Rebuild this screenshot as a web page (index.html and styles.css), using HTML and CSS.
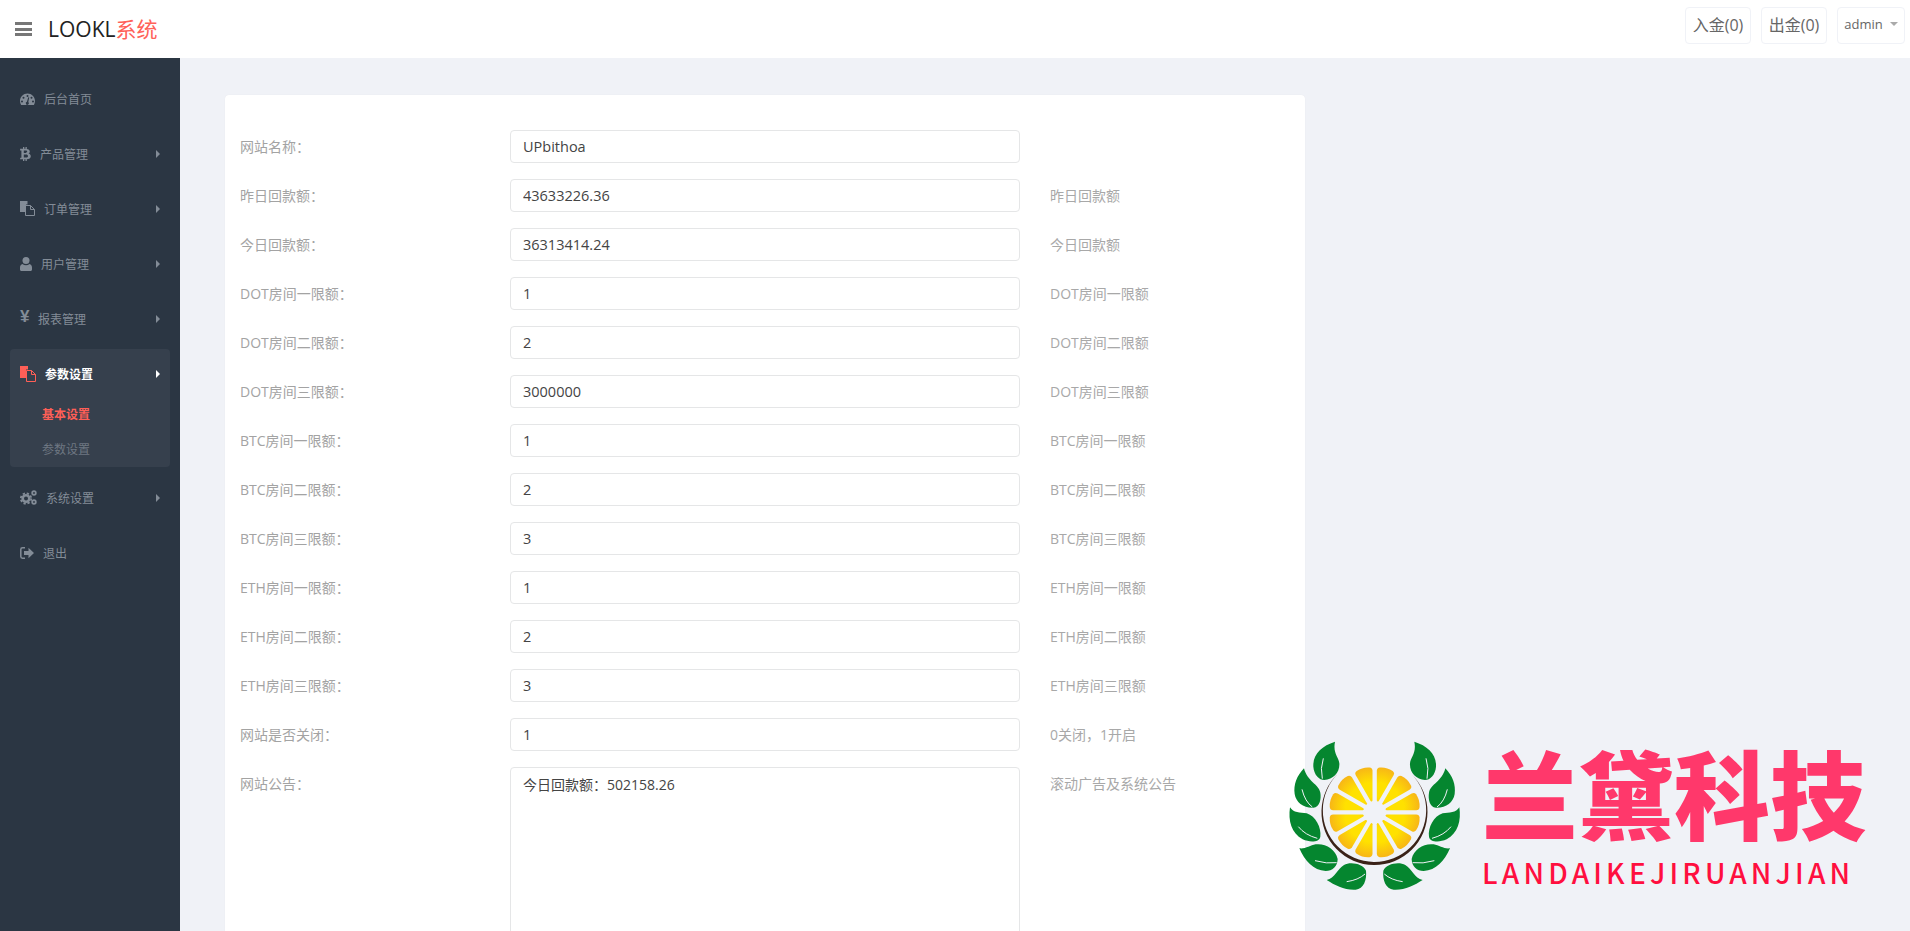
FILE: index.html
```html
<!DOCTYPE html>
<html lang="zh-CN">
<head>
    <meta charset="UTF-8">
    <title>LOOKL系统</title>
    <link rel="stylesheet" href="styles.css">
</head>
<body>

    <header class="topbar">
        <div class="burger"><span></span><span></span><span></span></div>
        <div class="brand">LOOKL<span>系统</span></div>
        <div class="top-actions">
            <a class="top-btn">入金(0)</a>
            <a class="top-btn">出金(0)</a>
            <a class="top-btn top-user">admin <i class="caret"></i></a>
        </div>
    </header>

    <div class="layout">
        <nav class="sidebar">
            <a class="nav-item">
                <svg class="icon" width="15" height="14" viewBox="0 0 15 14"><path fill="currentColor" fill-rule="evenodd" d="M7.5 1.5C3.4 1.5 0 4.8 0 9c0 1.500.4 2.800 1.100 4h12.800c.7-1.200 1.100-2.500 1.100-4 0-4.200-3.400-7.500-7.500-7.500zM7.500 3a1 1 0 1 1 0 2 1 1 0 0 1 0-2zM3.500 4.700a1 1 0 1 1 0 2 1 1 0 0 1 0-2zM11.500 4.700a1 1 0 1 1 0 2 1 1 0 0 1 0-2zM2 8.500a1 1 0 1 1 0 2 1 1 0 0 1 0-2zM13 8.500a1 1 0 1 1 0 2 1 1 0 0 1 0-2zM9.200 5.500l-.9 4.600a1.500 1.500 0 1 1-1.400-.3l1.400-4.500z"/></svg>
                后台首页
            </a>
            <a class="nav-item has-sub">
                <svg class="icon" width="11" height="14" viewBox="0 0 11 14"><path fill="currentColor" fill-rule="evenodd" d="M3 0h1.300v1.800h1.200V0h1.300v1.900C8.500 2.200 9.800 3 9.800 4.500c0 1-.6 1.800-1.400 2.100 1.400.3 2.400 1.200 2.400 2.700 0 2-1.600 2.800-4 2.900V14H5.500v-1.700H4.300V14H3v-1.700H0l.3-1.600h1.100V3.400H.1V1.800H3zM3.800 3.500v2.400h1.900c.9 0 1.500-.4 1.500-1.200s-.6-1.200-1.500-1.200zM3.800 7.500v3.100h2.300c1.100 0 1.900-.5 1.900-1.500S7.200 7.500 6.100 7.500z"/></svg>
                产品管理
            </a>
            <a class="nav-item has-sub">
                <svg class="icon" width="15" height="15" viewBox="0 0 15 15"><path fill="currentColor" d="M0 0h7.500v3.500H6V11H0z"/><path fill="none" stroke="currentColor" d="M5.500 4.500h5l4 4v6h-9zM10.500 4.500v4h4"/></svg>
                订单管理
            </a>
            <a class="nav-item has-sub">
                <svg class="icon" width="12" height="14" viewBox="0 0 12 14"><circle fill="currentColor" cx="6" cy="3.500" r="3.500"/><path fill="currentColor" d="M2.500 7C1 7.300 0 8.600 0 10.500V12.500C0 13.400.6 14 1.500 14h9c.9 0 1.500-.6 1.500-1.500v-2C12 8.600 11 7.300 9.500 7 8.600 7.800 7.400 8.200 6 8.200S3.400 7.800 2.500 7z"/></svg>
                用户管理
            </a>
            <a class="nav-item has-sub">
                <span class="icon icon-yen">¥</span>
                报表管理
            </a>

            <div class="nav-group">
                <a class="nav-item has-sub active">
                    <svg class="icon" width="16" height="16" viewBox="0 0 16 16"><path fill="currentColor" d="M0 0h8v3.500H6V12H0z"/><path fill="none" stroke="currentColor" d="M6.500 4.500h5l4 4v7h-9zM11.500 4.500v4h4"/></svg>
                    参数设置
                </a>
                <a class="sub-item current">基本设置</a>
                <a class="sub-item">参数设置</a>
            </div>

            <a class="nav-item has-sub">
                <svg class="icon" width="17" height="15" viewBox="0 0 17 15"><circle cx="6" cy="8.500" r="3.300" fill="none" stroke="currentColor" stroke-width="2.600"/><circle cx="6" cy="8.500" r="5.200" fill="none" stroke="currentColor" stroke-width="1.800" stroke-dasharray="2.300 1.800"/><circle cx="14" cy="3" r="1.800" fill="none" stroke="currentColor" stroke-width="1.800"/><circle cx="14" cy="12" r="1.800" fill="none" stroke="currentColor" stroke-width="1.800"/></svg>
                系统设置
            </a>
            <a class="nav-item">
                <svg class="icon" width="14" height="12" viewBox="0 0 14 12"><path fill="none" stroke="currentColor" stroke-width="1.500" d="M5 .8H2.500C1.500.8.800 1.500.8 2.500v7c0 1 .7 1.700 1.700 1.700H5"/><path fill="currentColor" d="M8.500.8 14 6l-5.500 5.200V8H4V4h4.500z"/></svg>
                退出
            </a>
        </nav>

        <main class="content">
            <form class="panel">
                <label class="field-label">网站名称：</label>
                <input class="field-input" type="text" value="UPbithoa">
                <span class="field-hint"></span>

                <label class="field-label">昨日回款额：</label>
                <input class="field-input" type="text" value="43633226.36">
                <span class="field-hint">昨日回款额</span>

                <label class="field-label">今日回款额：</label>
                <input class="field-input" type="text" value="36313414.24">
                <span class="field-hint">今日回款额</span>

                <label class="field-label">DOT房间一限额：</label>
                <input class="field-input" type="text" value="1">
                <span class="field-hint">DOT房间一限额</span>

                <label class="field-label">DOT房间二限额：</label>
                <input class="field-input" type="text" value="2">
                <span class="field-hint">DOT房间二限额</span>

                <label class="field-label">DOT房间三限额：</label>
                <input class="field-input" type="text" value="3000000">
                <span class="field-hint">DOT房间三限额</span>

                <label class="field-label">BTC房间一限额：</label>
                <input class="field-input" type="text" value="1">
                <span class="field-hint">BTC房间一限额</span>

                <label class="field-label">BTC房间二限额：</label>
                <input class="field-input" type="text" value="2">
                <span class="field-hint">BTC房间二限额</span>

                <label class="field-label">BTC房间三限额：</label>
                <input class="field-input" type="text" value="3">
                <span class="field-hint">BTC房间三限额</span>

                <label class="field-label">ETH房间一限额：</label>
                <input class="field-input" type="text" value="1">
                <span class="field-hint">ETH房间一限额</span>

                <label class="field-label">ETH房间二限额：</label>
                <input class="field-input" type="text" value="2">
                <span class="field-hint">ETH房间二限额</span>

                <label class="field-label">ETH房间三限额：</label>
                <input class="field-input" type="text" value="3">
                <span class="field-hint">ETH房间三限额</span>

                <label class="field-label">网站是否关闭：</label>
                <input class="field-input" type="text" value="1">
                <span class="field-hint">0关闭，1开启</span>

                <label class="field-label">网站公告：</label>
                <textarea class="field-input field-area">今日回款额：502158.26</textarea>
                <span class="field-hint">滚动广告及系统公告</span>
            </form>
        </main>
    </div>

    <!-- watermark sits over the page -->
    <div class="watermark">
        <svg class="wm-logo" width="200" height="201" viewBox="0 0 600 603">
            <defs>
                <radialGradient id="slice" gradientUnits="userSpaceOnUse" cx="0" cy="-70" r="85">
                    <stop offset="0.25" stop-color="#ffe100"/>
                    <stop offset="1" stop-color="#f4a520"/>
                </radialGradient>
                <g id="leaves">
                    <path class="leaf" d="M165 35C125 48 98 72 100 110c2 25 18 40 33 40 27-2 47-22 45-50-2-20-20-30-13-65z"/>
                    <path class="vein" d="M130 85Q120 115 127 146"/>
                    <path class="leaf" d="M72 115C50 138 40 165 44 192c4 25 26 42 56 41 20-1 24-28 21-45C116 162 82 155 72 115z"/>
                    <path class="vein" d="M66 178Q75 215 97 231"/>
                    <path class="leaf" d="M30 232c-6 40 4 78 38 96 22 10 50 9 53-8 4-26-14-62-41-70-20-3-40-1-50-18z"/>
                    <path class="vein" d="M55 290Q75 315 112 325"/>
                    <path class="leaf" d="M58 355c16 37 42 67 79 68 20 0 36-14 36-36-6-30-38-48-66-44-17 3-32 15-49 12z"/>
                    <path class="vein" d="M105 392Q140 402 170 398"/>
                    <path class="leaf" d="M140 450c25 16 55 31 87 29 24-2 34-30 31-57-8-20-46-28-66-17-20 11-27 40-52 45z"/>
                    <path class="vein" d="M200 455Q235 450 255 432"/>
                </g>
                <path id="wedge" fill="url(#slice)" d="M-3-36-26-122Q-28-131-20-134-0-141 20-134 28-131 26-122L3-36Q0-31-3-36z"/>
            </defs>
            <use href="#leaves"/>
            <use href="#leaves" transform="translate(568 0) scale(-1 1)"/>
            <path fill="#3a2218" d="M175 130A159 159 0 1 0 395 133 155 155 0 1 1 175 130z"/>
            <g transform="translate(284 247)">
                <use href="#wedge" transform="rotate(15)"/>
                <use href="#wedge" transform="rotate(45)"/>
                <use href="#wedge" transform="rotate(75)"/>
                <use href="#wedge" transform="rotate(105)"/>
                <use href="#wedge" transform="rotate(135)"/>
                <use href="#wedge" transform="rotate(165)"/>
                <use href="#wedge" transform="rotate(195)"/>
                <use href="#wedge" transform="rotate(225)"/>
                <use href="#wedge" transform="rotate(255)"/>
                <use href="#wedge" transform="rotate(285)"/>
                <use href="#wedge" transform="rotate(315)"/>
                <use href="#wedge" transform="rotate(345)"/>
            </g>
        </svg>
        <div class="wm-text">
            <div class="wm-title">兰黛科技</div>
            <div class="wm-sub">LANDAIKEJIRUANJIAN</div>
        </div>
    </div>

</body>
</html>
```

FILE: styles.css
```css
* {
    box-sizing: border-box;
}

html, body {
    height: 100%;
}

body {
    margin: 0;
    overflow: hidden;
    font-family: "Open Sans", "Noto Sans CJK SC", sans-serif;
    font-size: 14px;
    background-color: #f0f2f7;
    color: #666;
}

/* top bar */
.topbar {
    display: flex;
    align-items: center;
    height: 58px;
    padding: 0 5px 0 15px;
    background-color: #fff;
}

.burger {
    display: flex;
    flex-direction: column;
    gap: 2.5px;
    width: 17px;
    margin-right: 16px;
}

.burger span {
    height: 3px;
    background-color: #777;
}

.brand {
    margin-top: -2px;
    font-size: 21px;
    color: #222;
}

.brand span {
    color: #ff6159;
}

.top-actions {
    display: flex;
    gap: 10px;
    margin-left: auto;
    margin-top: -8px;
}

.top-btn {
    display: flex;
    align-items: center;
    justify-content: center;
    width: 66px;
    height: 37px;
    padding-bottom: 2px;
    font-size: 16px;
    color: #666;
    border: 1px solid #f0f2f7;
    border-radius: 4px;
}

.top-user {
    width: 68px;
    gap: 7px;
    font-size: 13px;
}

.caret {
    border-top: 4px solid #aaa;
    border-left: 4px solid transparent;
    border-right: 4px solid transparent;
}

/* sidebar */
.layout {
    display: flex;
    height: calc(100% - 58px);
}

.sidebar {
    flex: 0 0 180px;
    padding-top: 13px;
    background-color: #2b3643;
    font-size: 12px;
    color: #838c97;
}

.nav-item {
    display: flex;
    align-items: center;
    position: relative;
    height: 55px;
    padding-left: 20px;
}

.icon {
    margin-right: 9px;
    flex: none;
}

.icon-yen {
    width: 9px;
    margin-top: -4px;
    font-family: "Liberation Sans", sans-serif;
    font-size: 17px;
    font-weight: bold;
    line-height: 17px;
}

.has-sub::after {
    content: "";
    position: absolute;
    left: 156px;
    top: 50%;
    margin-top: -4px;
    border-left: 4px solid currentColor;
    border-top: 4px solid transparent;
    border-bottom: 4px solid transparent;
}

.nav-group {
    margin: 3px 10px;
    padding-bottom: 1px;
    background-color: #36404d;
    border-radius: 4px;
}

.nav-group .nav-item {
    height: 50px;
    margin-bottom: -3px;
    padding-left: 10px;
}

.nav-group .has-sub::after {
    left: 146px;
}

.nav-item.active {
    color: #fff;
    font-weight: bold;
}

.nav-item.active .icon {
    color: #ff5f57;
}

.sub-item {
    display: flex;
    align-items: center;
    height: 35px;
    padding-left: 32px;
    color: #6e7782;
}

.sub-item.current {
    color: #ff5f57;
    font-weight: bold;
}

/* form */
.content {
    flex: 1;
    overflow: hidden;
    padding: 37px 0 0 45px;
}

.panel {
    display: grid;
    grid-template-columns: 270px 510px 1fr;
    column-gap: 0;
    row-gap: 16px;
    width: 1080px;
    padding: 35px 0 40px 15px;
    background-color: #fff;
    border-radius: 4px;
    box-shadow: 0 0 1px rgba(0, 0, 0, 0.08);
}

.field-label {
    align-self: start;
    line-height: 33px;
    color: #a3a3a3;
}

.field-input {
    height: 33px;
    width: 510px;
    padding: 0 12px;
    font-family: inherit;
    font-size: 14.5px;
    color: #444;
    background-color: #fff;
    border: 1px solid #e5e6e7;
    border-radius: 4px;
    outline: none;
}

.field-area {
    height: 220px;
    padding-top: 7px;
    line-height: 20px;
    font-size: 14px;
    resize: none;
}

.field-hint {
    align-self: start;
    padding-left: 30px;
    line-height: 33px;
    color: #a8a8a8;
}

/* watermark */
.watermark {
    position: absolute;
    left: 1280px;
    top: 730px;
    display: flex;
}

.wm-logo {
    flex: none;
}

.leaf {
    fill: #05862f;
}

.vein {
    fill: none;
    stroke: #f0f2f7;
    stroke-width: 3;
}

.wm-text {
    margin-left: 2px;
}

.wm-title {
    margin-top: 2px;
    font-family: "Noto Sans CJK SC", sans-serif;
    font-size: 96px;
    font-weight: 900;
    line-height: 118px;
    white-space: nowrap;
    color: #ff386b;
}

.wm-sub {
    margin-top: 6px;
    font-family: "Noto Sans CJK SC", "Noto Sans", sans-serif;
    font-size: 28px;
    font-weight: 500;
    line-height: 32px;
    letter-spacing: 4.2px;
    white-space: nowrap;
    color: #ff0f3f;
}
```
